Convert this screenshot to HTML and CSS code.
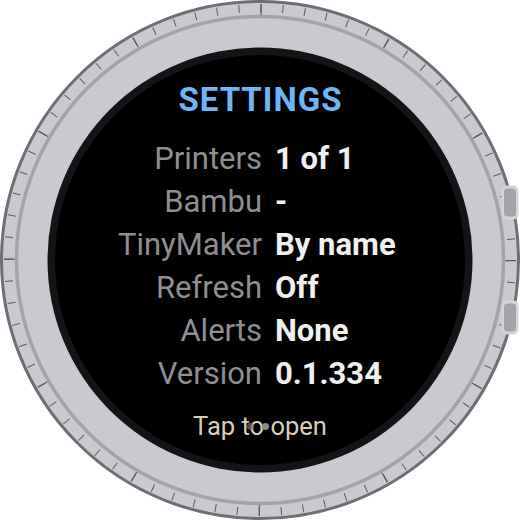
FILE: index.html
```html
<!DOCTYPE html>
<html>
<head>
<meta charset="utf-8">
<link rel="stylesheet" href="styles.css">
</head>
<body>
<div class="watch">
  <svg class="frame" width="520" height="520" viewBox="0 0 520 520">
    <circle cx="260" cy="260" r="258.5" fill="#c9cacf" stroke="#6d6f74" stroke-width="3"/>
    <circle cx="260" cy="260" r="252" fill="none" stroke="#5b5d62" stroke-width="8" stroke-dasharray="1 20.9911"/>
    <circle cx="260" cy="260" r="250.5" fill="none" stroke="#55575b" stroke-width="11" stroke-dasharray="1.2 129.96"/>
    <circle cx="260" cy="260" r="243.5" fill="none" stroke="#a3a4a9" stroke-width="3.5"/>
    <circle cx="260" cy="260" r="212.5" fill="#141416"/>
    <circle cx="260" cy="260" r="205" fill="#000"/>
    <rect x="501.5" y="185.5" width="17" height="34" rx="5" fill="#d3d4d8"/>
    <rect x="504" y="188.5" width="12" height="28" rx="3.5" fill="#a3a4a9"/>
    <rect x="501.5" y="300.5" width="17" height="34" rx="5" fill="#d3d4d8"/>
    <rect x="504" y="303.5" width="12" height="28" rx="3.5" fill="#a3a4a9"/>
  </svg>
  <div class="content">
    <div class="title">SETTINGS</div>
    <div class="rows">
      <div class="label">Printers</div><div class="value">1 of 1</div>
      <div class="label">Bambu</div><div class="value">-</div>
      <div class="label">TinyMaker</div><div class="value">By name</div>
      <div class="label">Refresh</div><div class="value">Off</div>
      <div class="label">Alerts</div><div class="value">None</div>
      <div class="label">Version</div><div class="value">0.1.334</div>
    </div>
    <div class="tap">Tap to open<span class="dot dim"></span><span class="dot active"></span></div>
  </div>
</div>
</body>
</html>
```
FILE: styles.css
```css
html, body {
  margin: 0;
  padding: 0;
  background: #ffffff;
}
.watch {
  position: relative;
  width: 520px;
  height: 520px;
  font-family: Roboto, "Noto Sans", sans-serif;
}
.frame {
  position: absolute;
  left: 0;
  top: 0;
}
.content {
  position: relative;
  display: flex;
  flex-direction: column;
  align-items: center;
  padding-top: 80px;
}
.title {
  color: #6cb6f6;
  font-weight: 700;
  font-size: 33px;
  letter-spacing: 1px;
  padding-left: 1px;
  line-height: 40px;
  margin-bottom: 17px;
}
.rows {
  display: grid;
  grid-template-columns: 1fr 1fr;
  column-gap: 13px;
  width: 100%;
  box-sizing: border-box;
  padding-left: 17px;
  font-size: 31px;
  line-height: 43px;
}
.label {
  text-align: right;
  color: #8e8e93;
}
.value {
  text-align: left;
  color: #f0f0f0;
  font-weight: 700;
}
.tap {
  position: relative;
  margin-top: 16px;
  color: #d8cdb9;
  font-size: 25.5px;
  line-height: 30px;
}
.dot {
  position: absolute;
  top: 11.5px;
  width: 7px;
  height: 7px;
  border-radius: 50%;
}
.dot.dim {
  left: 53.5px;
  background: rgba(110, 110, 116, 0.7);
}
.dot.active {
  left: 68.5px;
  background: #8a8a8f;
}
```
